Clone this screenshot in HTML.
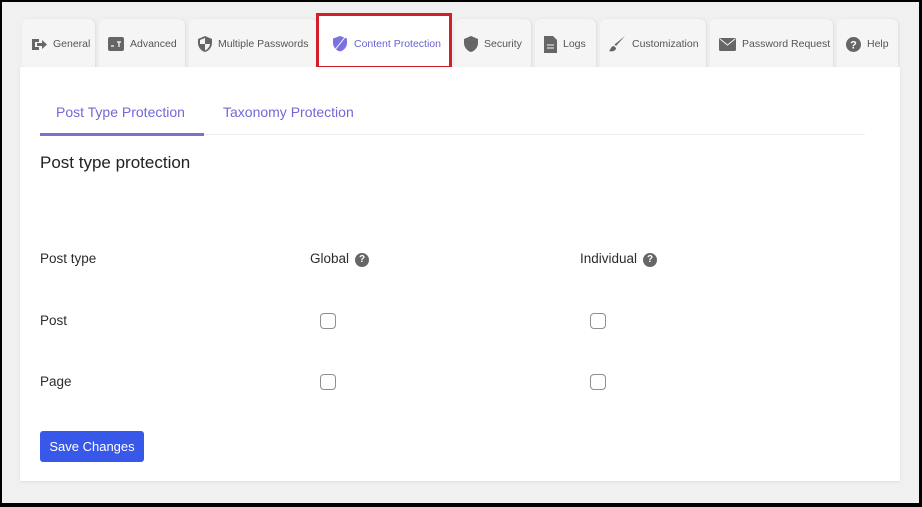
<!DOCTYPE html>
<html><head><meta charset="utf-8"><style>
*{margin:0;padding:0;box-sizing:border-box}
body{width:922px;height:507px;overflow:hidden;background:#000;font-family:"Liberation Sans",sans-serif;position:relative}
.bg{position:absolute;left:2px;top:2px;width:917px;height:501px;background:#f0f0f0}
.tab{position:absolute;top:19px;height:49px;background:#f5f5f5;border-radius:6px 6px 0 0;box-shadow:1px 0 2px rgba(0,0,0,.08);font-size:10.5px;color:#555;display:flex;align-items:center;padding-left:9px;gap:6px;padding-top:1px}
.tab svg{flex:none}
.panel{position:absolute;left:20px;top:67px;width:880px;height:414px;background:#fff;box-shadow:0 1px 3px rgba(0,0,0,.08)}
.red{position:absolute;left:316px;top:13px;width:136px;height:56px;border:3.5px solid #d21f2a;background:#fff}
.abs{position:absolute}
.cb{position:absolute;width:16px;height:16px;border:1.3px solid #8c8f94;border-radius:4px;background:#fff}
.q{display:inline-block;width:14px;height:14px;border-radius:50%;background:#666;color:#fff;font-size:10px;font-weight:bold;text-align:center;line-height:14px;vertical-align:1px;margin-left:6px}
.t{font-size:13.5px;color:#2c2c2c}
</style></head><body>
<div class="bg"></div>
<div class="tab" style="left:22px;width:73px"><svg width="16" height="13" viewBox="0 0 16 13"><path d="M1 1h7v3H4v5h4v3H1z" fill="#666"/><path d="M6 5h5V2l5 4.5-5 4.5V8H6z" fill="#666"/></svg>General</div>
<div class="tab" style="left:99px;width:86px"><svg width="16" height="14" viewBox="0 0 16 14"><rect width="16" height="14" rx="2" fill="#666"/><path d="M3 9h3M9 5h4M11 5v5" stroke="#fff" stroke-width="1.2"/></svg>Advanced</div>
<div class="tab" style="left:189px;width:128px"><svg width="14" height="16" viewBox="0 0 14 16"><path d="M7 0L0 3v4c0 4 3 8 7 9 4-1 7-5 7-9V3z" fill="#666"/><path d="M7 2v6h5c-.5 3-2.5 5.5-5 6.5V8H2V4z" fill="#f5f5f5"/></svg>Multiple Passwords</div>
<div class="red"></div>
<div class="abs" style="left:332px;top:35px"><svg width="16" height="17" viewBox="0 0 16 17"><path d="M8 1L1 3.5v4.5c0 4 3 7.5 7 8.5 4-1 7-4.5 7-8.5V3.5z" fill="#7b72e0"/><path d="M14 1L2 16" stroke="#fff" stroke-width="1"/></svg></div>
<div class="abs" style="left:354px;top:38px;font-size:10.5px;color:#6a62d6">Content Protection</div>
<div class="tab" style="left:455px;width:76px"><svg width="14" height="16" viewBox="0 0 14 16"><path d="M7 0L0 3v4c0 4 3 8 7 9 4-1 7-5 7-9V3z" fill="#666"/></svg>Security</div>
<div class="tab" style="left:535px;width:61px"><svg width="13" height="17" viewBox="0 0 13 17"><path d="M0 0h9l4 4v13H0z" fill="#666"/><path d="M3 9h7M3 12h7" stroke="#f5f5f5" stroke-width="1"/></svg>Logs</div>
<div class="tab" style="left:600px;width:106px"><svg width="17" height="16" viewBox="0 0 17 16"><path d="M16 0L7 10l-1.5-1.5z" fill="#666"/><path d="M5 10c-3 0-3 3-5 5 3 1 7 0 7-3z" fill="#666"/></svg>Customization</div>
<div class="tab" style="left:710px;width:123px"><svg width="17" height="13" viewBox="0 0 17 13"><rect width="17" height="13" rx="1.5" fill="#666"/><path d="M1 1l7.5 6L16 1" stroke="#f5f5f5" fill="none"/></svg>Password Request</div>
<div class="tab" style="left:837px;width:61px"><svg width="15" height="15" viewBox="0 0 15 15"><circle cx="7.5" cy="7.5" r="7.5" fill="#666"/><text x="7.5" y="11.5" text-anchor="middle" font-size="11" font-weight="bold" fill="#fff" font-family="Liberation Sans">?</text></svg>Help</div>
<div class="panel"></div>
<div class="abs" style="left:56px;top:104px;font-size:14px;color:#7268d8">Post Type Protection</div>
<div class="abs" style="left:223px;top:104px;font-size:14px;color:#7268d8">Taxonomy Protection</div>
<div class="abs" style="left:40px;top:134px;width:825px;height:1px;background:#eee"></div>
<div class="abs" style="left:40px;top:133px;width:164px;height:3px;background:#7b6fd0"></div>
<div class="abs" style="left:40px;top:153px;font-size:17px;color:#222">Post type protection</div>
<div class="abs t" style="left:40px;top:251px">Post type</div>
<div class="abs t" style="left:310px;top:251px">Global<span class="q">?</span></div>
<div class="abs t" style="left:580px;top:251px">Individual<span class="q">?</span></div>
<div class="abs t" style="left:40px;top:313px">Post</div>
<div class="abs t" style="left:40px;top:374px">Page</div>
<div class="cb" style="left:320px;top:313px"></div>
<div class="cb" style="left:590px;top:313px"></div>
<div class="cb" style="left:320px;top:374px"></div>
<div class="cb" style="left:590px;top:374px"></div>
<div class="abs" style="left:40px;top:431px;width:104px;height:31px;background:#3858e9;border-radius:3px;color:#fff;font-size:13px;text-align:center;line-height:31px">Save Changes</div>
</body></html>
